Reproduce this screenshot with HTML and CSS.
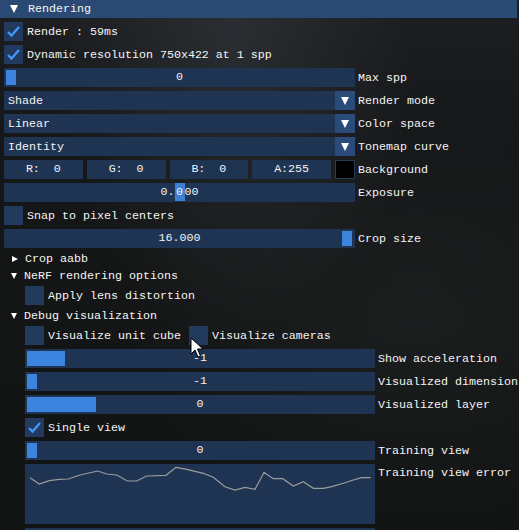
FILE: index.html
```html
<!DOCTYPE html>
<html>
<head>
<meta charset="utf-8">
<link rel="stylesheet" href="styles.css">
</head>
<body>
<div class="panel">
  <div class="header"><span class="tri-down big"></span><span>Rendering</span></div>
  <div class="body">
    <div class="row">
      <span class="check on"><svg width="19" height="19" viewBox="0 0 19 19"><polyline points="4,10 7.5,13.5 15,5" fill="none" stroke="#4296fa" stroke-width="2.4"/></svg></span>
      <span class="text">Render : 59ms</span>
    </div>
    <div class="row">
      <span class="check on"><svg width="19" height="19" viewBox="0 0 19 19"><polyline points="4,10 7.5,13.5 15,5" fill="none" stroke="#4296fa" stroke-width="2.4"/></svg></span>
      <span class="text">Dynamic resolution 750x422 at 1 spp</span>
    </div>
    <div class="row">
      <div class="frame slider"><span class="grab" style="left:2px;width:10px"></span><span class="val">0</span></div>
      <span class="label">Max spp</span>
    </div>
    <div class="row">
      <div class="frame combo"><span class="ctext">Shade</span><span class="cbtn"><span class="tri-down"></span></span></div>
      <span class="label">Render mode</span>
    </div>
    <div class="row">
      <div class="frame combo"><span class="ctext">Linear</span><span class="cbtn"><span class="tri-down"></span></span></div>
      <span class="label">Color space</span>
    </div>
    <div class="row">
      <div class="frame combo"><span class="ctext">Identity</span><span class="cbtn"><span class="tri-down"></span></span></div>
      <span class="label">Tonemap curve</span>
    </div>
    <div class="row">
      <div class="rgba">
        <span class="chan">R:  0</span>
        <span class="chan">G:  0</span>
        <span class="chan">B:  0</span>
        <span class="chan">A:255</span>
        <span class="swatch"></span>
      </div>
      <span class="label">Background</span>
    </div>
    <div class="row">
      <div class="frame slider"><span class="val">0.<span class="sel">0</span>00</span></div>
      <span class="label">Exposure</span>
    </div>
    <div class="row">
      <span class="check"></span>
      <span class="text">Snap to pixel centers</span>
    </div>
    <div class="row">
      <div class="frame slider"><span class="grab" style="right:3px;width:10px"></span><span class="val">16.000</span></div>
      <span class="label">Crop size</span>
    </div>
    <div class="node"><span class="tri-right"></span><span>Crop aabb</span></div>
    <div class="node"><span class="tri-down small"></span><span>NeRF rendering options</span></div>
    <div class="row indent">
      <span class="check"></span>
      <span class="text">Apply lens distortion</span>
    </div>
    <div class="node"><span class="tri-down small"></span><span>Debug visualization</span></div>
    <div class="row indent">
      <span class="check"></span>
      <span class="text">Visualize unit cube</span>
      <span class="check second"></span>
      <span class="text">Visualize cameras</span>
    </div>
    <div class="row indent">
      <div class="frame slider wide"><span class="grab" style="left:2px;width:38px"></span><span class="val">-1</span></div>
      <span class="label">Show acceleration</span>
    </div>
    <div class="row indent">
      <div class="frame slider wide"><span class="grab" style="left:2px;width:10px"></span><span class="val">-1</span></div>
      <span class="label">Visualized dimension</span>
    </div>
    <div class="row indent">
      <div class="frame slider wide"><span class="grab" style="left:2px;width:69px"></span><span class="val">0</span></div>
      <span class="label">Visualized layer</span>
    </div>
    <div class="row indent">
      <span class="check on"><svg width="19" height="19" viewBox="0 0 19 19"><polyline points="4,10 7.5,13.5 15,5" fill="none" stroke="#4296fa" stroke-width="2.4"/></svg></span>
      <span class="text">Single view</span>
    </div>
    <div class="row indent">
      <div class="frame slider wide"><span class="grab" style="left:2px;width:10px"></span><span class="val">0</span></div>
      <span class="label">Training view</span>
    </div>
    <div class="plotrow indent">
      <div class="plot">
        <svg width="350" height="60" viewBox="0 0 350 60">
          <polyline fill="none" stroke="#9c9c9c" stroke-width="1.2" points="5,13.7 14.3,20 24.3,16.7 34.3,15.3 43.3,15 55,11 72.7,7 81.7,10 91.7,11 102.3,17 111.7,17 121.7,12 141,11.3 151,3.3 161.7,5.3 178.3,9.3 188.3,13.3 200,22.7 210,26 220,23.3 230,25.3 235,16 239,8.3 248.3,14.7 257.7,14.7 268.3,22 278.3,17.7 288.3,24.3 298.3,24.3 306.7,22.7 318.3,19.3 328.3,16 336.7,13.7 345.7,13.7"/>
        </svg>
      </div>
      <span class="label">Training view error</span>
    </div>
    <div class="row indent">
      <div class="frame slider wide"></div>
    </div>
  </div>
</div>
<svg class="cursor" width="14" height="22" viewBox="0 0 14 22">
  <path d="M1,1 L1,17 L5,13 L8,20 L10.5,19 L7.5,12 L13,12 Z" fill="#fff" stroke="#000" stroke-width="1"/>
</svg>
</body>
</html>
```
FILE: styles.css
```css
html, body {
  margin: 0;
  padding: 0;
  width: 519px;
  height: 530px;
  overflow: hidden;
}
body {
  background:
    radial-gradient(ellipse at 45% 5%, rgba(70, 76, 84, 0.35), rgba(0,0,0,0) 45%),
    radial-gradient(ellipse at 80% 60%, rgba(40, 42, 44, 0.4), rgba(0,0,0,0) 50%),
    linear-gradient(180deg, #1c1e21 0%, #151617 30%, #121313 100%);
  font-family: "Liberation Mono", "DejaVu Sans Mono", monospace;
  font-size: 11.67px;
  color: #f4f4f4;
  position: relative;
}
.panel {
  display: flex;
  flex-direction: column;
}
.header {
  height: 18px;
  width: 517px;
  background: #2a4a73;
  display: flex;
  align-items: center;
  white-space: pre;
}
.header .tri-down.big {
  margin-left: 10px;
  margin-right: 10px;
  border-left: 4.5px solid transparent;
  border-right: 4.5px solid transparent;
  border-top: 8px solid #fff;
}
.body {
  display: flex;
  flex-direction: column;
  gap: 4px;
  padding: 4px 0 0 4px;
}
.row {
  height: 19px;
  display: flex;
  align-items: center;
  white-space: pre;
}
.indent {
  padding-left: 21px;
}
.check {
  width: 19px;
  height: 19px;
  background: #213a5e;
  flex: none;
  display: block;
}
.check svg {
  display: block;
}
.check.second {
  margin-left: 8px;
}
.text {
  margin-left: 4px;
}
.frame {
  width: 351px;
  height: 19px;
  background: #1f3352;
  position: relative;
  flex: none;
}
.frame.wide {
  width: 350px;
}
.label {
  margin-left: 3px;
  white-space: pre;
}
.slider .val {
  position: absolute;
  left: 0;
  right: 0;
  top: 0;
  height: 19px;
  line-height: 19px;
  text-align: center;
}
.grab {
  position: absolute;
  top: 2px;
  height: 15px;
  background: #3d84de;
}
.sel {
  background: #3f7fd4;
  padding: 2px 1.5px;
}
.combo {
  display: flex;
  align-items: center;
}
.ctext {
  flex: 1;
  padding-left: 4px;
}
.cbtn {
  width: 20px;
  height: 19px;
  background: #2b4c7a;
  display: flex;
  align-items: center;
  justify-content: center;
}
.tri-down {
  width: 0;
  height: 0;
  border-left: 4.5px solid transparent;
  border-right: 4.5px solid transparent;
  border-top: 8px solid #fff;
  display: block;
}
.tri-down.small {
  border-left-width: 3.5px;
  border-right-width: 3.5px;
  border-top-width: 6px;
  margin-left: 7px;
  margin-right: 7px;
}
.tri-right {
  width: 0;
  height: 0;
  border-top: 3.5px solid transparent;
  border-bottom: 3.5px solid transparent;
  border-left: 6px solid #fff;
  display: block;
  margin-left: 8px;
  margin-right: 7px;
}
.node {
  height: 13px;
  display: flex;
  align-items: center;
  white-space: pre;
}
.rgba {
  width: 351px;
  height: 19px;
  display: flex;
  gap: 4px;
  flex: none;
}
.chan {
  flex: 1;
  background: #1f3352;
  text-align: center;
  line-height: 19px;
  white-space: pre;
}
.swatch {
  width: 18px;
  height: 17px;
  background: #000;
  border: 1px solid #2a3a50;
  flex: none;
}
.plotrow {
  display: flex;
  align-items: flex-start;
}
.plot {
  width: 350px;
  height: 60px;
  background: #1f3352;
  flex: none;
}
.plot svg {
  display: block;
}
.plotrow .label {
  line-height: 19px;
}
.cursor {
  position: absolute;
  left: 190px;
  top: 337px;
}
```
